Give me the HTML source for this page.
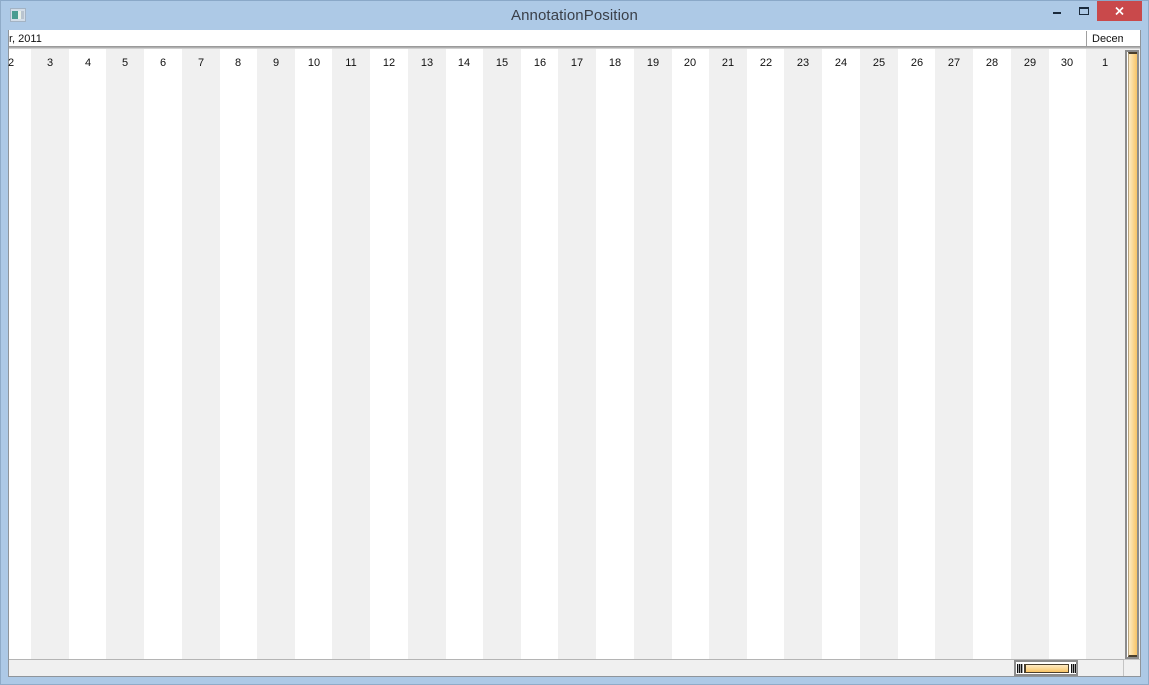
<!DOCTYPE html>
<html>
<head>
<meta charset="utf-8">
<style>
html,body{margin:0;padding:0;width:1149px;height:685px;overflow:hidden;background:#adc9e6;font-family:"Liberation Sans",sans-serif;color:#111}
div{position:absolute;box-sizing:border-box}
.s{top:49px;height:611px;background:#f0f0f0;width:38px}
.n{top:56px;width:38px;text-align:center;font-size:11px;line-height:14px}
.g{top:664px;width:6px;height:9px;background:repeating-linear-gradient(90deg,#111 0,#111 1px,#a8a8a8 1px,#a8a8a8 2px)}
</style>
</head>
<body>
<div style="left:0;top:0;width:1149px;height:685px;border:1px solid #8fabc8;border-top-color:#8aa8c8"></div>
<div style="left:511px;top:7px;font-size:15px;line-height:18px;letter-spacing:.1px;color:#3a3f48;white-space:nowrap">AnnotationPosition</div>

<svg style="position:absolute;left:10px;top:8px" width="16" height="14" viewBox="0 0 16 14">
<rect x=".5" y=".5" width="15" height="13" fill="#d3dde8" stroke="#a3b3c4"/>
<rect x="2" y="3" width="6" height="8" fill="#4a9c90"/>
<rect x="8" y="3" width="3" height="8" fill="#e8f0e8"/>
<rect x="11" y="3" width="3" height="8" fill="#b9c4cf"/>
</svg>

<div style="left:1053px;top:12px;width:8px;height:2px;background:#1a2a3c"></div>
<div style="left:1079px;top:7px;width:10px;height:8px;border:1px solid #1a2a3c;border-top-width:2px"></div>
<div style="left:1097px;top:1px;width:45px;height:20px;background:#c9494b"></div>
<svg style="position:absolute;left:1115px;top:7px" width="9" height="8" viewBox="0 0 9 8">
<path d="M1 .5 L8 7.5 M8 .5 L1 7.5" stroke="#fff" stroke-width="1.7"/>
</svg>

<div style="left:8px;top:30px;width:1133px;height:647px;background:#fff"></div>
<div style="left:8px;top:30px;width:1px;height:647px;background:#8f959b"></div>
<div style="left:1140px;top:30px;width:1px;height:647px;background:#8f959b"></div>
<div style="left:8px;top:676px;width:1133px;height:1px;background:#8f959b"></div>

<div style="left:9px;top:32px;font-size:11px;line-height:15px;white-space:nowrap">r, 2011</div>
<div style="left:1086px;top:31px;width:1px;height:15px;background:#a0a0a0"></div>
<div style="left:1092px;top:31px;width:31px;height:15px;overflow:hidden;font-size:11px;line-height:17px;white-space:nowrap">December</div>
<div style="left:9px;top:46px;width:1131px;height:3px;background:linear-gradient(#8f8f8f,#b5b5b5 60%,#e4e4e4)"></div>

<div class="s" style="left:31px"></div><div class="s" style="left:106px"></div><div class="s" style="left:182px"></div><div class="s" style="left:257px"></div><div class="s" style="left:332px"></div><div class="s" style="left:408px"></div><div class="s" style="left:483px"></div><div class="s" style="left:558px"></div><div class="s" style="left:634px"></div><div class="s" style="left:709px"></div><div class="s" style="left:784px"></div><div class="s" style="left:860px"></div><div class="s" style="left:935px"></div><div class="s" style="left:1011px"></div><div class="s" style="left:1086px"></div>

<div class="n" style="left:-8px">2</div><div class="n" style="left:31px">3</div><div class="n" style="left:69px">4</div><div class="n" style="left:106px">5</div><div class="n" style="left:144px">6</div><div class="n" style="left:182px">7</div><div class="n" style="left:219px">8</div><div class="n" style="left:257px">9</div><div class="n" style="left:295px">10</div><div class="n" style="left:332px">11</div><div class="n" style="left:370px">12</div><div class="n" style="left:408px">13</div><div class="n" style="left:445px">14</div><div class="n" style="left:483px">15</div><div class="n" style="left:521px">16</div><div class="n" style="left:558px">17</div><div class="n" style="left:596px">18</div><div class="n" style="left:634px">19</div><div class="n" style="left:671px">20</div><div class="n" style="left:709px">21</div><div class="n" style="left:747px">22</div><div class="n" style="left:784px">23</div><div class="n" style="left:822px">24</div><div class="n" style="left:860px">25</div><div class="n" style="left:898px">26</div><div class="n" style="left:935px">27</div><div class="n" style="left:973px">28</div><div class="n" style="left:1011px">29</div><div class="n" style="left:1048px">30</div><div class="n" style="left:1086px">1</div>

<div style="left:9px;top:659px;width:1131px;height:17px;background:#f0f0f0;border-top:1px solid #b4b4b4"></div>
<div style="left:1124px;top:49px;width:16px;height:627px;background:#f0f0f0"></div>
<div style="left:1123px;top:660px;width:1px;height:16px;background:#c4c4c4"></div>
<div style="left:1124px;top:659px;width:16px;height:1px;background:#c4c4c4"></div>

<div style="left:1125px;top:50px;width:14px;height:609px;background:#fff;border:2px solid #8c8c8c"></div>
<div style="left:1128px;top:52px;width:9px;height:605px;background:linear-gradient(90deg,#fdebc4,#f8c465);border-top:2px solid #4a3f2c;border-bottom:2px solid #4a3f2c;border-left:1px solid #b8a47e"></div>

<div style="left:1014px;top:660px;width:64px;height:16px;background:#fff;border:2px solid #8c8c8c"></div>
<div class="g" style="left:1017px"></div>
<div class="g" style="left:1071px"></div>
<div style="left:1024px;top:664px;width:45px;height:9px;background:linear-gradient(#fdebc4,#f8c465);border:1px solid #4a3f2c;border-left-width:2px"></div>
</body>
</html>
